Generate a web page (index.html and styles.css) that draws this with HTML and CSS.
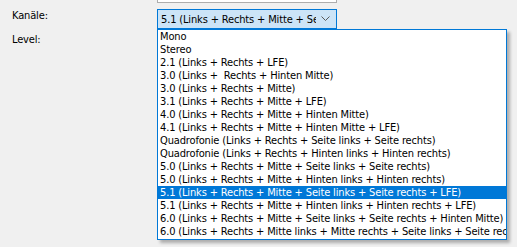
FILE: index.html
```html
<!DOCTYPE html>
<html lang="de">
<head>
<meta charset="utf-8">
<link rel="stylesheet" href="styles.css">
</head>
<body>
<div class="form">
  <div class="row row-prev">
    <div class="label"></div>
    <div class="field-prev"></div>
  </div>
  <div class="row row-channels">
    <div class="label">Kanäle:</div>
    <div class="combo-wrap">
      <div class="combo">
        <span class="combo-text">5.1 (Links + Rechts + Mitte + Seite links + Seite rechts + LFE)</span>
        <svg class="chevron" width="9" height="6" viewBox="0 0 9 6"><path d="M0.5 0.5 L4.5 4.5 L8.5 0.5" fill="none" stroke="#5a5a5a" stroke-width="1"/></svg>
      </div>
      <ul class="popup">
        <li>Mono</li>
        <li>Stereo</li>
        <li>2.1 (Links + Rechts + LFE)</li>
        <li>3.0 (Links +&nbsp; Rechts + Hinten Mitte)</li>
        <li>3.0 (Links + Rechts + Mitte)</li>
        <li>3.1 (Links + Rechts + Mitte + LFE)</li>
        <li>4.0 (Links + Rechts + Mitte + Hinten Mitte)</li>
        <li>4.1 (Links + Rechts + Mitte + Hinten Mitte + LFE)</li>
        <li>Quadrofonie (Links + Rechts + Seite links + Seite rechts)</li>
        <li>Quadrofonie (Links + Rechts + Hinten links + Hinten rechts)</li>
        <li>5.0 (Links + Rechts + Mitte + Seite links + Seite rechts)</li>
        <li>5.0 (Links + Rechts + Mitte + Hinten links + Hinten rechts)</li>
        <li class="selected">5.1 (Links + Rechts + Mitte + Seite links + Seite rechts + LFE)</li>
        <li>5.1 (Links + Rechts + Mitte + Hinten links + Hinten rechts + LFE)</li>
        <li>6.0 (Links + Rechts + Mitte + Seite links + Seite rechts + Hinten Mitte)</li>
        <li>6.0 (Links + Rechts + Mitte links + Mitte rechts + Seite links + Seite rechts)</li>
      </ul>
    </div>
  </div>
  <div class="row row-level">
    <div class="label">Level:</div>
    <div class="field-level"></div>
  </div>
</div>
</body>
</html>
```

FILE: styles.css
```css
html, body {
  margin: 0;
  padding: 0;
  background: #f0f0f0;
  width: 517px;
  height: 247px;
  overflow: hidden;
}

body {
  font-family: "DejaVu Sans Condensed", "Liberation Sans", sans-serif;
  font-size: 11px;
  letter-spacing: -0.15px;
  color: #000;
}

.form {
  display: flex;
  flex-direction: column;
}

.row {
  display: grid;
  grid-template-columns: 157px 180px;
  align-items: start;
}

.label {
  padding-left: 12px;
  line-height: 13px;
  padding-top: 0;
}

.field-prev {
  height: 2px;
  background: #fff;
  border: 1px solid #adadad;
  border-top: none;
}

.row-channels {
  margin-top: 6px;
}

.combo-wrap {
  position: relative;
}

.combo {
  box-sizing: border-box;
  height: 20px;
  border: 1px solid #0078d7;
  background: #cce4f7;
  display: flex;
  align-items: center;
  padding: 0 4px 0 3px;
  gap: 5px;
}

.combo-text {
  flex: 1;
  overflow: hidden;
  white-space: nowrap;
}

.chevron {
  flex: none;
  margin-right: 2px;
}

.popup {
  position: absolute;
  top: 20px;
  left: 0;
  width: 350px;
  box-sizing: border-box;
  margin: 0;
  padding: 0 0 1px 0;
  list-style: none;
  background: #fff;
  border: 1px solid #0078d7;
  box-shadow: 3px 3px 3px rgba(0, 0, 0, 0.28);
  z-index: 2;
}

.popup li {
  height: 13px;
  line-height: 13px;
  padding-left: 2px;
  white-space: nowrap;
  overflow: hidden;
}

.popup li.selected {
  background: #0078d7;
  color: #fff;
}

.row-level {
  margin-top: 4px;
}

.field-level {
  height: 20px;
}
```
